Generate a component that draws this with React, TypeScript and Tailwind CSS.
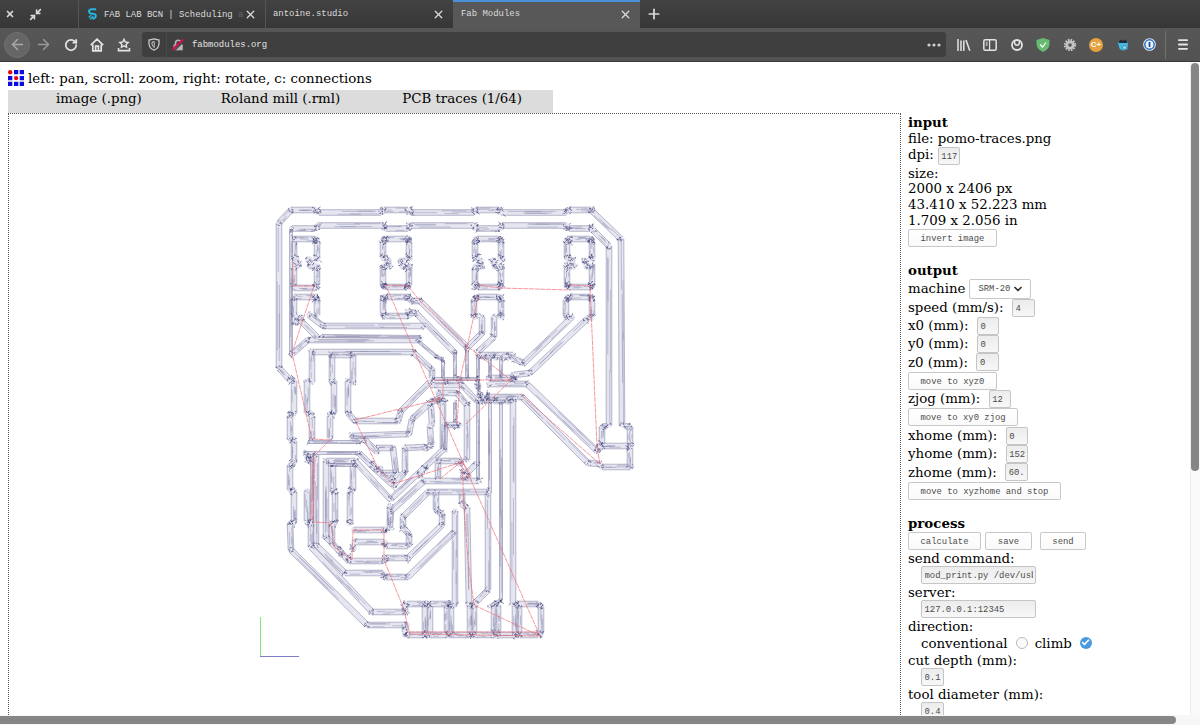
import React from "react";
import { ArrowLeft, ArrowRight, RotateCw, X, Plus, Minimize2, ChevronDown, Check } from "lucide-react";

type Poly = number[];

const traces: Poly[] = [
  [290, 380, 279, 368, 279, 223, 291, 210, 315, 210],
  [319, 212.5, 381, 212.5], [384, 210, 408, 210], [411, 212.5, 474, 212.5], [477, 210, 499, 210],
  [501, 212.5, 566, 212.5], [569, 210, 591, 210], [593, 212, 621, 239, 622, 425],
  [292, 228.5, 315, 228.5], [319, 225.5, 383, 225.5], [386, 228.5, 408, 228.5], [411, 225.5, 474, 225.5],
  [477, 228.5, 499, 228.5], [502, 225.5, 566, 225.5], [569, 228.5, 590, 228.5], [593, 230, 609, 246, 609, 425],
  [294, 239, 315, 239, 317, 241, 317, 257], [294, 241, 294, 257], [317, 268, 317, 285], [294, 268, 294, 285], [294, 288, 315, 288],
  [294, 297, 315, 297, 317, 299, 317, 315], [294, 299, 294, 315],
  [297, 317, 317, 337], [309, 315, 323, 326, 424, 326], [292, 354, 308, 340, 420, 340],
  [312, 382, 312, 352, 413, 352, 432, 370, 432, 378],
  [332, 383, 332, 355, 353, 355, 353, 383],
  [386, 316, 408, 316], [408, 312, 416, 313, 455, 353],
  [383, 313, 383, 299, 386, 297, 408, 297, 412, 301, 420, 301, 467, 347],
  [383, 257, 383, 242, 386, 239, 408, 239, 409, 242, 409, 257], [383, 268, 383, 285, 386, 287, 407, 287, 409, 285, 409, 268],
  [475, 257, 475, 242, 478, 239, 499, 239, 501, 242, 501, 257], [475, 268, 475, 284, 478, 287, 499, 287, 501, 284, 501, 268],
  [567, 257, 567, 242, 570, 239, 590, 239, 592, 242, 592, 257], [567, 268, 567, 284, 570, 287, 590, 287, 592, 284, 592, 268],
  [474, 315, 474, 300, 478, 297, 499, 297, 501, 300, 501, 315], [566, 315, 566, 300, 570, 297, 590, 297, 592, 300, 592, 315],
  [482, 317, 482, 333, 467, 348], [494, 317, 494, 337, 478, 352],
  [572, 317, 524, 363, 514, 359], [587, 319, 530, 373, 514, 375],
  [294, 381, 294, 413], [290, 416, 290, 439], [294, 441, 294, 463], [290, 465, 290, 490], [294, 492, 294, 521],
  [290, 524, 291, 550, 367, 625, 407, 625],
  [307, 381, 307, 413], [312, 416, 312, 439], [334, 381, 334, 413], [330, 416, 330, 438],
  [348, 381, 348, 413, 355, 421, 398, 421, 401, 411, 430, 382],
  [352, 436, 409, 434, 412, 419, 430, 403, 440, 398],
  [431, 407, 432, 424], [430, 426, 431, 445, 425, 449], [425, 447, 405, 448, 405, 472, 393, 486],
  [376, 448, 393, 448, 396, 473, 380, 473], [352, 438, 365, 440, 377, 452],
  [445, 424, 444, 449, 425, 467, 391, 499],
  [390, 522, 391, 511, 424, 481], [424, 481, 479, 481],
  [359, 453, 375, 469, 393, 485], [307, 456, 312, 463],
  [307, 491, 307, 521], [316, 455, 316, 545, 345, 573, 383, 573], [386, 577, 408, 577, 454, 532],
  [326, 461, 326, 537, 349, 561, 383, 561], [326, 461, 355, 461, 390, 499],
  [333, 465, 333, 490], [335, 492, 335, 521], [353, 465, 353, 490], [350, 492, 350, 521],
  [311, 524, 311, 547, 372, 612, 406, 612],
  [332, 524, 332, 544], [354, 530, 384, 530], [354, 542, 384, 542], [386, 546, 408, 546], [386, 558, 408, 558, 442, 525],
  [427, 493, 403, 517, 403, 528, 409, 534, 409, 545],
  [390, 506, 390, 528], [427, 492, 488, 492], [436, 493, 436, 510, 442, 514, 442, 525],
  [455, 511, 455, 605], [462, 493, 462, 504, 467, 508, 469, 604],
  [407, 604, 424, 604], [430, 604, 451, 604], [517, 604, 538, 604, 541, 607, 541, 632],
  [407, 635, 424, 635], [430, 635, 446, 635], [452, 635, 469, 635], [475, 635, 493, 635], [499, 635, 514, 635], [520, 635, 538, 635],
  [405, 607, 405, 612], [405, 625, 405, 632],
  [425, 606, 425, 633], [430, 606, 430, 633], [447, 606, 447, 633], [451, 606, 451, 633], [470, 606, 470, 633], [474, 606, 474, 633],
  [494, 606, 494, 633], [498, 606, 498, 633], [515, 606, 515, 633], [519, 606, 519, 633],
  [602, 444, 602, 427, 606, 426], [625, 426, 630, 427, 630, 444], [602, 446, 628, 446], [602, 467, 630, 467, 630, 448],
  [489, 384, 527, 384, 597, 451, 600, 447], [487, 397, 522, 397, 588, 463, 600, 464],
  [478, 355, 513, 355], [484, 400, 513, 400],
  [443, 399, 443, 448], [438, 393, 457, 393, 467, 405, 467, 460],
  [446, 425, 460, 425], [438, 461, 462, 461], [438, 462, 438, 477], [477, 463, 462, 478],
  [460, 383, 477, 401], [434, 385, 462, 385], [489, 378, 513, 378],
  [513, 401, 513, 604], [488, 493, 488, 590, 476, 602],
];

const thin: Poly[] = [
  [291, 229, 291, 355], [322, 336, 421, 337], [418, 341, 437, 357, 443, 360, 443, 378], [455, 352, 455, 378],
  [467, 350, 467, 378], [478, 358, 478, 378], [490, 358, 490, 378], [501, 358, 501, 378],
  [434, 379, 478, 379], [478, 402, 478, 480], [490, 402, 490, 491], [501, 402, 501, 600, 490, 606],
  [455, 402, 455, 422], [308, 442, 360, 442], [306, 453, 358, 453], [478, 379, 479, 396], [430, 400, 445, 400],
  [330, 465, 355, 465], [312, 455, 312, 521], [488, 392, 488, 400],
];

const knots: [number, number][] = [
  [296, 260], [298, 265], [309, 260], [311, 266], [388, 261], [389, 266], [401, 261], [403, 266],
  [480, 261], [481, 266], [493, 261], [495, 266], [572, 261], [573, 266], [585, 261], [587, 266],
  [317, 258], [317, 267], [384, 258], [384, 267], [409, 258], [409, 267], [476, 258], [476, 267], [501, 258], [501, 267],
  [568, 258], [568, 267], [592, 258], [592, 267], [316, 240], [384, 240], [408, 240], [476, 240], [500, 240], [568, 240], [591, 240],
  [316, 286], [384, 286], [408, 286], [476, 286], [500, 286], [568, 286], [591, 286],
  [316, 298], [384, 298], [408, 298], [476, 298], [500, 298], [568, 298], [591, 298],
  [307, 454], [309, 460], [464, 472], [468, 476], [460, 463], [392, 480], [380, 469], [372, 464], [425, 468], [420, 475],
  [478, 386], [480, 395], [512, 377], [514, 381], [460, 380], [447, 382], [480, 401], [440, 402], [456, 425], [484, 357], [496, 357],
  [508, 357], [484, 400], [496, 401], [508, 401], [342, 554], [339, 550], [348, 558], [353, 548], [296, 322], [300, 318],
  [292, 380], [291, 414], [292, 440], [292, 464], [292, 491], [292, 523], [310, 414], [332, 414], [309, 523], [334, 491], [351, 491],
  [334, 523], [350, 522], [385, 530], [385, 544], [385, 559], [385, 576], [317, 211], [382, 211], [410, 211], [475, 211], [500, 211],
  [567, 211], [592, 211], [317, 227], [384, 227], [409, 227], [475, 227], [501, 227], [567, 227], [591, 228],
  [410, 314], [384, 315], [475, 316], [501, 316], [567, 317], [590, 318], [427, 604], [449, 604], [472, 604], [496, 604], [517, 604],
  [427, 635], [449, 635], [472, 635], [496, 635], [517, 635], [540, 634], [405, 605], [406, 634], [600, 446], [630, 446],
];

const rapids: Poly[] = [
  [293, 262, 293, 286, 314, 286, 292, 353, 307, 418, 312, 439, 330, 440, 315, 455, 313, 522, 331, 523, 334, 547, 352, 560, 353, 530, 384, 530, 384, 560, 403, 607, 410, 634, 540, 636, 474, 605, 468, 560, 464, 507, 462, 462, 393, 484, 377, 466, 355, 420, 440, 399],
  [386, 286, 428, 382, 462, 460, 540, 636], [386, 285, 408, 286, 420, 301, 467, 346, 511, 380, 466, 424],
  [478, 285, 500, 288, 570, 290], [570, 285, 590, 286, 597, 446, 600, 464, 520, 394],
  [478, 297, 474, 315, 460, 380, 457, 424], [443, 382, 443, 397, 432, 401], [434, 380, 511, 380],
  [440, 479, 462, 461, 471, 476, 462, 478], [312, 458, 312, 520], [410, 632, 538, 632],
];

const noise = (n: number) => {
  const v = Math.sin(n * 127.1 + 311.7) * 43758.5453;
  return v - Math.floor(v);
};

function bandPaths(list: Poly[], half: number) {
  let body = "", edge = "", streak = "", joint = "";
  let seed = 1;
  for (const p of list) {
    for (let i = 0; i + 3 < p.length; i += 2) {
      const [x1, y1, x2, y2] = [p[i], p[i + 1], p[i + 2], p[i + 3]];
      const len = Math.hypot(x2 - x1, y2 - y1) || 1;
      const ux = (x2 - x1) / len, uy = (y2 - y1) / len;
      const at = (t: number, o: number) =>
        `${(x1 + ux * len * t - uy * o).toFixed(1)} ${(y1 + uy * len * t + ux * o).toFixed(1)}`;
      body += `M${at(0, 0)}L${at(1, 0)}`;
      edge += `M${at(0, half)}L${at(1, half)}M${at(0, -half)}L${at(1, -half)}`;
      for (let k = 0; k < 4; k++) {
        seed++;
        const a = noise(seed) * 0.7, o = (noise(seed + 500) * 2 - 1) * half * 0.7;
        streak += `M${at(a, o)}L${at(Math.min(1, a + 0.2 + noise(seed + 900) * 0.35), o)}`;
      }
      for (const t of [0, 1]) {
        for (let k = 0; k < 5; k++) {
          seed++;
          const along = ((noise(seed) - 0.5) * 5) / len, o = (noise(seed + 40) * 2 - 1) * half;
          joint += `M${at(t + along, o)}L${at(t + along + ((noise(seed + 80) - 0.5) * 4) / len, o + (noise(seed + 120) - 0.5) * 3.4)}`;
        }
      }
    }
  }
  return { body, edge, streak, joint };
}

const wide = bandPaths(traces, 2.8);
const slim = bandPaths(thin, 1.5);
const knotPath = knots
  .map(([x, y], i) =>
    [0, 1, 2, 3, 4, 5, 6, 7, 8].map((k) => {
      const s = i * 31 + k * 7;
      const a = x + (noise(s) - 0.5) * 6.5, b = y + (noise(s + 3) - 0.5) * 6.5;
      return `M${a.toFixed(1)} ${b.toFixed(1)}l${((noise(s + 5) - 0.5) * 5).toFixed(1)} ${((noise(s + 9) - 0.5) * 5).toFixed(1)}`;
    }).join(""),
  )
  .join("");
const knotBody = knots.map(([x, y]) => `M${x} ${y}h.01`).join("");
const toPath = (p: Poly) => "M" + p.join(" ");

function Toolpath() {
  return (
    <svg className="block h-[601px] w-[891px]" viewBox="9 114 891 601" fill="none">
      <path d={knotBody} stroke="#e2e2ee" strokeWidth="7.5" strokeLinecap="round" />
      <path d={wide.body} stroke="#e6e6f0" strokeWidth="5.6" strokeLinecap="round" />
      <path d={slim.body} stroke="#e0e0ec" strokeWidth="3" />
      <path d={wide.edge} stroke="#8c8caf" strokeWidth="0.6" />
      <path d={slim.edge} stroke="#8080a6" strokeWidth="0.55" />
      <path d={wide.streak + slim.streak} stroke="#8a8aaf" strokeWidth="0.48" />
      <path d={wide.joint + slim.joint} stroke="#383872" strokeWidth="0.55" />
      <path d={knotPath} stroke="#383872" strokeWidth="0.6" />
      <path d={rapids.map(toPath).join("")} stroke="#f06a72" strokeWidth="0.7" strokeDasharray="5 0.7" />
      <path d="M260.5 617V656" stroke="#7be87b" />
      <path d="M260 656.5H299" stroke="#7f7fc9" />
    </svg>
  );
}

function Row({ h = "h-[18.35px]", children }: { h?: string; children?: React.ReactNode }) {
  return <div className={`flex shrink-0 items-center whitespace-nowrap ${h}`}>{children}</div>;
}
function Field({ v, w = "w-[22.5px]", m = "ml-[8.5px]" }: { v: string; w?: string; m?: string }) {
  return (
    <div className={`h-[18px] shrink-0 rounded-[2px] border border-[#c5c5c5] bg-linear-to-b from-[#ececec] to-[#f7f7f7] px-[2.5px] font-['Liberation_Mono'] text-[8.9px] leading-[18px] text-[#4c4c4c] ${w} ${m}`}>
      <div className="overflow-hidden">{v}</div>
    </div>
  );
}
function Btn({ t, w, m = "" }: { t: string; w: string; m?: string }) {
  return (
    <button className={`h-[18px] shrink-0 rounded-[2px] border border-[#c8c8c8] bg-linear-to-b from-white to-[#fafafa] pt-px text-center font-['Liberation_Mono'] text-[8.9px] leading-[17px] text-[#4c4c4c] ${w} ${m}`}>
      {t}
    </button>
  );
}

function Sidebar() {
  return (
    <aside className="flex w-[290px] flex-col overflow-hidden pl-[7px] pt-[2px]">
      <Row h="h-4"><b>input</b></Row>
      <Row h="h-4">file: pomo-traces.png</Row>
      <Row h="h-[18.3px]"><span className="-mt-0.5">dpi:</span><Field v="117" m="ml-[4px]" /></Row>
      <Row h="h-[15.8px]">size:</Row>
      <Row h="h-[15.8px]">2000 x 2406 px</Row>
      <Row h="h-[15.8px]">43.410 x 52.223 mm</Row>
      <Row h="h-[15.8px]">1.709 x 2.056 in</Row>
      <Row><Btn t="invert image" w="w-[89px]" /></Row>
      <Row h="h-[15.7px]" />
      <Row h="h-4"><b>output</b></Row>
      <Row h="h-[20px]">
        <span>machine</span>
        <div className="ml-[4px] flex h-5 w-[62px] items-center justify-between rounded-[2px] border border-[#c8c8c8] pl-2 pr-[6px] pt-px font-['Liberation_Mono'] text-[8.9px] text-[#4c4c4c]">
          SRM-20<ChevronDown size={12} strokeWidth={3.5} className="text-[#333]" />
        </div>
      </Row>
      <Row h="h-[18px]">speed (mm/s):<Field v="4" /></Row>
      <Row>x0 (mm):<Field v="0" /></Row>
      <Row>y0 (mm):<Field v="0" /></Row>
      <Row>z0 (mm):<Field v="0" /></Row>
      <Row><Btn t="move to xyz0" w="w-[89px]" /></Row>
      <Row>zjog (mm):<Field v="12" /></Row>
      <Row><Btn t="move to xy0 zjog" w="w-[110px]" /></Row>
      <Row>xhome (mm):<Field v="0" /></Row>
      <Row>yhome (mm):<Field v="152" /></Row>
      <Row>zhome (mm):<Field v="60." /></Row>
      <Row><Btn t="move to xyzhome and stop" w="w-[153px]" /></Row>
      <Row h="h-4" />
      <Row h="h-4"><b>process</b></Row>
      <Row>
        <Btn t="calculate" w="w-[73px]" />
        <Btn t="save" w="w-[47px]" m="ml-[4px]" />
        <Btn t="send" w="w-[46px]" m="ml-[8px]" />
      </Row>
      <Row h="h-[15.8px]">send command:</Row>
      <Row><Field v="mod_print.py /dev/usb" w="w-[115px]" m="ml-[13px]" /></Row>
      <Row h="h-[15.8px]">server:</Row>
      <Row><Field v="127.0.0.1:12345" w="w-[115px]" m="ml-[13px]" /></Row>
      <Row h="h-[15.8px]">direction:</Row>
      <Row>
        <span className="ml-[13px]">conventional</span>
        <span className="-mt-0.5 ml-[8px] mr-[7px] size-3 rounded-full border border-[#bbb] bg-[#fafafa]" />
        climb
        <span className="-mt-0.5 ml-[8px] flex size-3 items-center justify-center rounded-full bg-[#4a9ae0]">
          <Check size={9} strokeWidth={4.5} className="text-white" />
        </span>
      </Row>
      <Row h="h-[15.5px]">cut depth (mm):</Row>
      <Row><Field v="0.1" w="w-[23px]" m="ml-[13px]" /></Row>
      <Row h="h-[15.5px]">tool diameter (mm):</Row>
      <Row><Field v="0.4" w="w-[23px]" m="ml-[13px]" /></Row>
    </aside>
  );
}

function TabBar() {
  return (
    <div className="flex h-7 items-stretch bg-linear-to-b from-[#434343] to-[#363636] font-['Liberation_Mono'] text-[8.95px] text-[#dcdcdc]">
      <div className="flex w-[79px] items-center border-r border-[#555] pl-[5px]">
        <X size={10} strokeWidth={4} />
        <Minimize2 size={13} strokeWidth={3} className="ml-[14px]" />
      </div>
      <div className="flex w-[187px] items-center border-r border-[#555] pl-2">
        <svg width="11" height="14" viewBox="0 0 12 14" fill="none" stroke="#25b5e0" strokeWidth="2.2">
          <path d="M10 1.8H5Q2 2 2.2 4.4Q2.6 6.6 6 6.8Q9.8 7 9.6 9.2Q9.4 11.8 6 12.4" />
          <path d="M1.8 10.8 4.6 8.4M3.4 12.8 6.8 9.6" strokeWidth="1.6" />
        </svg>
        <span className="ml-[6px] w-[140px] whitespace-pre pt-0.5 leading-3">FAB LAB BCN | Scheduling <span className="text-[#666]">a</span></span>
        <X size={13} strokeWidth={2.4} />
      </div>
      <div className="flex w-[187px] items-center pl-[7px]">
        <span className="w-[159px] pt-px">antoine.studio</span>
        <X size={13} strokeWidth={2.4} />
      </div>
      <div className="flex w-[187px] items-center border-t-2 border-[#4a90d9] bg-[#585858] pb-0.5 pl-[8px]">
        <span className="w-[158px] pt-px">Fab Modules</span>
        <X size={13} strokeWidth={2.4} />
      </div>
      <div className="flex items-center pl-[6px]"><Plus size={16} strokeWidth={2.6} /></div>
    </div>
  );
}

function NavBar() {
  return (
    <div className="flex h-[34px] items-center border-b border-[#3a3a3a] bg-linear-to-b from-[#575757] to-[#525252] text-[#e4e4e4]">
      <div className="ml-1 flex size-[26px] items-center justify-center rounded-full border border-[#717171] bg-[#666]">
        <ArrowLeft size={17} className="text-[#aaa]" />
      </div>
      <ArrowRight size={17} className="ml-[5px] text-[#999]" />
      <RotateCw size={14} strokeWidth={3} className="ml-3" />
      <svg width="14" height="14" viewBox="0 0 14 14" fill="none" stroke="#e4e4e4" strokeWidth="1.7" className="ml-[12px]">
        <path d="M.8 7.2 7 1.2 13.2 7.2M2.8 6.5V12.8H11.2V6.5M5.6 12.5V8.2H8.4V12.5" />
      </svg>
      <svg width="14" height="14" viewBox="0 0 14 14" fill="none" stroke="#e4e4e4" strokeWidth="1.4" className="ml-[13px]">
        <path d="M7 1.3 8.3 4 11.2 4.4 9.1 6.4 9.6 9.2 7 7.9 4.4 9.2 4.9 6.4 2.8 4.4 5.7 4Z" />
        <path d="M1.5 10V12.6H12.5V10" strokeWidth="1.6" />
      </svg>
      <div className="ml-[11px] flex h-[25px] w-[804px] items-center rounded-[3px] bg-[#3f3f3f]">
        <div className="flex h-full w-[25px] items-center justify-center border-r border-[#484848]">
          <svg width="12" height="13" viewBox="0 0 12 13" fill="none" stroke="#c8c8c8" strokeWidth="1.3">
            <path d="M6 .9 11 2V6Q10.5 10.5 6 12.2Q1.5 10.5 1 6V2Z" />
            <path d="M6.2 3.6V9.5Q4.2 8.2 4 6.2V4.1Z" strokeWidth="1" />
          </svg>
        </div>
        <svg width="14" height="14" viewBox="0 0 14 14" fill="none" className="ml-1">
          <path d="M4.5 7V4.8Q4.8 2.2 7.3 2.2Q9.7 2.2 10 4.8V7" stroke="#b5b5b5" strokeWidth="1.6" />
          <path d="M2.5 6.6H11.8V12.3H2.5Z" fill="#b5b5b5" />
          <path d="M2.6 13.2 13.4 2.4" stroke="#3f3f3f" strokeWidth="1.6" />
          <path d="M1.2 12 12.3 1.2" stroke="#d70a4a" strokeWidth="1.9" />
        </svg>
        <span className="ml-[7px] flex-1 pt-0.5 font-['Liberation_Mono'] text-[8.95px]">fabmodules.org</span>
        <svg width="14" height="4" viewBox="0 0 14 4" fill="#d0d0d0" className="mr-[5px]">
          <circle cx="2" cy="2" r="1.6" /><circle cx="7" cy="2" r="1.6" /><circle cx="12" cy="2" r="1.6" />
        </svg>
      </div>
      <svg width="14" height="12" viewBox="0 0 14 12" fill="none" stroke="#e4e4e4" strokeWidth="1.5" className="ml-[11px]">
        <path d="M1 0V12M4 1.5V12M6.8 1.5V12M9 1 12.8 11.8" />
      </svg>
      <svg width="14" height="12" viewBox="0 0 14 12" fill="none" stroke="#e4e4e4" strokeWidth="1.5" className="ml-[12px]">
        <rect x=".8" y=".8" width="12.4" height="10.4" rx="1.5" />
        <path d="M6.6 1V11" strokeWidth="1.2" />
        <path d="M3.7 2.6V7" stroke="#a5a5a5" strokeWidth="2" />
      </svg>
      <svg width="12" height="12" viewBox="0 0 12 12" fill="none" stroke="#e4e4e4" strokeWidth="1.8" className="ml-[14px]">
        <circle cx="6" cy="6" r="5" />
        <path d="M3.6 2V4.2Q4 6.3 6 6.3Q8 6.3 8.4 4.2V2" strokeWidth="1.5" />
      </svg>
      <svg width="14" height="14" viewBox="0 0 14 14" className="ml-[13px]">
        <path d="M7 0 13.5 2V6Q13 11.5 7 14Q1 11.5 .5 6V2Z" fill="#68bc71" />
        <path d="M4.2 6.5 6.5 9 10 4.5" fill="none" stroke="#fff" strokeWidth="1.2" />
      </svg>
      <svg width="14" height="14" viewBox="0 0 14 14" fill="none" stroke="#c4c4c4" className="ml-[13px]">
        <circle cx="7" cy="7" r="5.2" strokeWidth="2" strokeDasharray="1.6 1.12" />
        <circle cx="7" cy="7" r="3.2" strokeWidth="2.8" />
      </svg>
      <div className="ml-[12px] flex size-[14px] items-center justify-center rounded-full bg-[#e6a03c] font-['Liberation_Sans'] text-[8px] font-bold leading-none text-white">C+</div>
      <svg width="12" height="12" viewBox="0 0 12 12" className="ml-[14px]">
        <path d="M.8 3.5H11L10.5 10Q6 13 2.5 9.5Z" fill="#46b8df" />
        <path d="M2 2.6 4 .6 6 1.8 8 .6 10 2.6V4H2Z" fill="#202d38" />
        <circle cx="7.6" cy="8.6" r="2" fill="#8cdcf2" stroke="#2a7da3" strokeWidth=".7" />
      </svg>
      <svg width="13" height="13" viewBox="0 0 13 13" className="ml-[14px]" fill="none">
        <circle cx="6.5" cy="6.5" r="6.3" fill="#eef4fb" />
        <circle cx="6.5" cy="6.5" r="4.7" stroke="#2a6fc2" strokeWidth="1.5" />
        <path d="M6.5 4V9" stroke="#1b4f99" strokeWidth="1.8" />
      </svg>
      <div className="ml-[9px] h-[28px] w-px bg-[#717171]" />
      <svg width="10" height="11" viewBox="0 0 10 11" className="ml-[12px]" stroke="#e4e4e4" strokeWidth="1.8" strokeLinecap="round">
        <path d="M.9 1.2H9.1M.9 5.5H9.1M.9 9.8H9.1" />
      </svg>
    </div>
  );
}

export default function App() {
  return (
    <div className="flex h-[725px] w-[1200px] flex-col overflow-hidden bg-white font-['DejaVu_Serif',serif] text-[13.35px] leading-none text-black">
      <TabBar />
      <NavBar />
      <div className="flex h-[653px]">
        <main className="flex w-[1190px] flex-col pl-2">
          <div className="flex h-[28px] items-center pt-[4px]">
            <svg width="16" height="16" viewBox="0 0 16 16" fill="#0c0ce0">
              <circle cx="2.2" cy="2.2" r="2.2" fill="#e01010" />
              <path d="M6 0h4.3v4.3H6zM11.7 0H16v4.3h-4.3zM0 6h4.3v4.3H0zM11.7 6H16v4.3h-4.3zM0 11.7h4.3V16H0zM6 11.7h4.3V16H6zM11.7 11.7H16V16h-4.3z" />
              <circle cx="8.1" cy="8.1" r="2.2" fill="#e01010" />
            </svg>
            <span className="ml-1 whitespace-nowrap pt-px">left: pan, scroll: zoom, right: rotate, c: connections</span>
          </div>
          <div className="grid h-[23px] w-[545px] grid-cols-3 bg-[#dcdcdc] pt-[2px] text-center">
            <span>image (.png)</span><span>Roland mill (.rml)</span><span>PCB traces (1/64)</span>
          </div>
          <div className="flex h-[602px]">
            <div className="w-[893px] shrink-0 overflow-hidden border border-b-0 border-dotted border-[#555]">
              <Toolpath />
            </div>
            <Sidebar />
          </div>
        </main>
        <div className="w-[10px] border-l border-[#eee] bg-[#fafafa] pt-[1px]">
          <div className="h-[408px] w-2 rounded-full bg-[#868686]" />
        </div>
      </div>
      <div className="h-[10px] bg-[#f7f7f7] pt-px">
        <div className="h-2 w-[1176px] rounded-r-full bg-[#868686]" />
      </div>
    </div>
  );
}
